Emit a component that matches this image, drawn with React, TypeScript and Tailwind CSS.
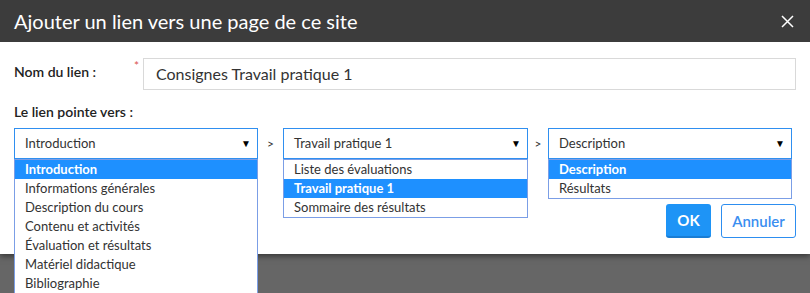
import React from 'react';

const sections = [
  'Introduction',
  'Informations générales',
  'Description du cours',
  'Contenu et activités',
  'Évaluation et résultats',
  'Matériel didactique',
  'Bibliographie',
];
const pages = ['Liste des évaluations', 'Travail pratique 1', 'Sommaire des résultats'];
const parts = ['Description', 'Résultats'];

// Open select with its option list shown under it
const OpenSelect: React.FC<{ value: string; options: string[]; width: string }> = ({ value, options, width }) => (
  <div className={`relative ${width}`}>
    <div className="flex h-[31px] items-center justify-between border border-[#2f8ff0] bg-white pl-[10px] pr-[6px] text-[13px] text-[#333]">
      <span>{value}</span>
      <span className="text-[10px] text-black">▼</span>
    </div>
    <ul className="absolute left-0 top-full w-full border border-[#7b9ee6] bg-white text-[13px] text-[#333]">
      {options.map((o) => (
        <li
          key={o}
          className={`flex h-[19px] items-center pl-[10px] ${o === value ? 'bg-[#1e90ff] font-bold text-white' : ''}`}
        >
          {o}
        </li>
      ))}
    </ul>
  </div>
);

const App: React.FC = () => {
  return (
    <div className="relative h-[293px] w-[810px] overflow-hidden bg-[#666]" style={{ fontFamily: 'Lato, "Noto Sans", sans-serif' }}>
      <div className="bg-white shadow-[0_2px_6px_rgba(0,0,0,0.5)]">
        {/* Header */}
        <div className="flex h-[42px] items-center justify-between bg-[#3c3c3c] pl-[14px] pr-[16px]">
          <h1 className="text-[20px] text-white">Ajouter un lien vers une page de ce site</h1>
          <svg width="13" height="13" viewBox="0 0 13 13" className="text-white">
            <path d="M1 1 L12 12 M12 1 L1 12" stroke="currentColor" strokeWidth="1.5" />
          </svg>
        </div>

        {/* Body */}
        <div className="px-[14px] pt-[16px] pb-[16px]">
          <div className="flex items-start">
            <label className="w-[120px] pt-[3px] text-[14px] font-semibold text-[#222]">Nom du lien :</label>
            <span className="w-[9px] pt-[2px] text-[12px] leading-none text-[#d9534f]">*</span>
            <div className="flex h-[32px] flex-1 items-center border border-[#d9d9d9] pl-[12px] text-[16px] text-[#333]">
              Consignes Travail pratique 1
            </div>
          </div>

          <div className="mt-[11px] text-[14px] font-semibold text-[#222]">Le lien pointe vers :</div>

          <div className="mt-[6px] flex items-center">
            <OpenSelect value="Introduction" options={sections} width="w-[244px]" />
            <span className="w-[25px] text-center text-[12px] text-[#333]">&gt;</span>
            <OpenSelect value="Travail pratique 1" options={pages} width="w-[245px]" />
            <span className="w-[20px] text-center text-[12px] text-[#333]">&gt;</span>
            <OpenSelect value="Description" options={parts} width="w-[244px]" />
          </div>

          <div className="mt-[45px] flex justify-end gap-[10px]">
            <button className="h-[34px] w-[45px] rounded-[3px] border-b-2 border-[#1a7dd4] bg-[#1e94f6] text-[15px] font-bold text-white">
              OK
            </button>
            <button className="h-[34px] w-[75px] rounded-[3px] border border-[#2d8ef0] bg-white text-[15px] font-semibold text-[#3a8ef0]">
              Annuler
            </button>
          </div>
        </div>
      </div>
    </div>
  );
};

export default App;
